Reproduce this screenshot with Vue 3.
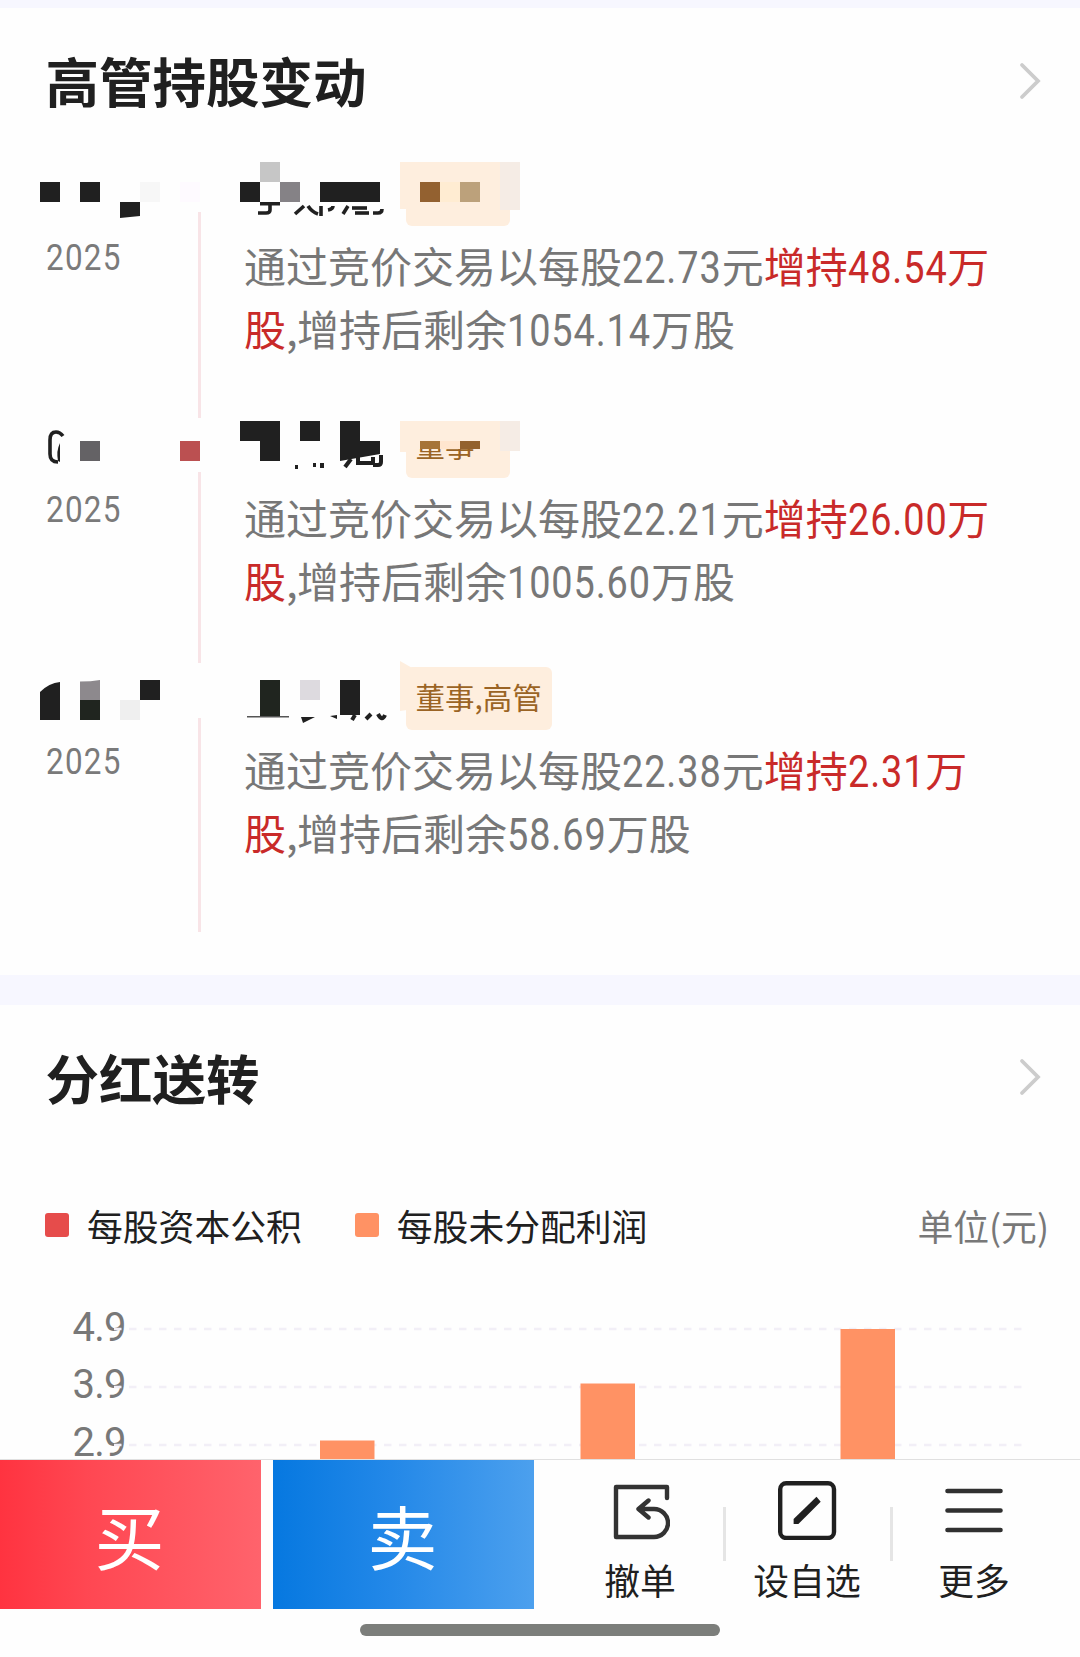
<script setup>
import { h } from 'vue'

const ink = '#202020'

// Narrow figures: glyphs are condensed and the freed width is given back to the line.
const squeeze = 0.86
const Num = ({ value }) => {
  const digits = value.length - 1
  const natural = 24.7 * digits + 11.6 + 1.06 * value.length
  return h('span', { class: 'num', style: { marginRight: `${-(1 - squeeze) * natural}px` } }, value)
}
Num.props = ['value']

const changes = [
  {
    price: '22.73', amount: '48.54', rest: '1054.14', rail: [52, 206],
    blocks: [
      [40, 22, 20, 20, ink], [80, 22, 20, 20, ink], [140, 22, 20, 20, '#f7f7f7'], [180, 22, 20, 20, '#fefaff'],
      [260, 2, 20, 20, '#c6c6c6'], [240, 22, 20, 20, ink], [280, 22, 20, 20, '#858286'], [320, 22, 60, 20, ink],
      [260, 42, 20, 3.5, ink]
    ],
    shapes: ['M120 42h20v14l-20 2z'],
    strokes: ['M270 45v5q0 3-4 3h-8', 'M295 54l9-8', 'M308 46q4 6 10 8', 'M321 46v10', 'M328 50q5-1 5-4', 'M348 46l-5 8', 'M352 48h15', 'M355 53h14', 'M382 49q0 4-4 4h-5'],
    tag: { x: 406, y: 20, w: 104, h: 46, cap: [400, 2, 100, 47], edge: [500, 2, 20, 48] },
    tagBlocks: [[420, 22, 20, 20, '#936130'], [440, 22, 20, 20, '#ffecd2'], [460, 22, 20, 20, '#bca17b']]
  },
  {
    price: '22.21', amount: '26.00', rest: '1005.60', rail: [60, 191],
    blocks: [
      [80, 29, 20, 20, '#646265'], [180, 29, 20, 20, '#bb5051'],
      [240, 9, 40, 20, ink], [260, 29, 20, 20, ink], [300, 9, 20, 20, ink], [340, 9, 20, 20, ink]
    ],
    shapes: ['M340 29h40v13l-40 7z', 'M60 31v19l-2-1q-2-10 2-18z'],
    strokes: ['M63 24q-3-4-7-4-6 0-6 8v14q0 8 8 8'],
    bold: ['M351 47l-6 8', 'M358 45v6h15v-6', 'M381 43v7q0 3-3 3h-5', 'M322 51v5', 'M313 53h3', 'M295 55h3'],
    tag: { x: 406, y: 30, w: 104, h: 36, cap: [400, 9, 100, 31], edge: [500, 9, 20, 30] },
    tagBlocks: [[420, 29, 20, 8, '#a67438'], [440, 29, 20, 8, '#ffe6cf'], [460, 29, 20, 8, '#93622e']],
    tagText: '董事', cut: 37
  },
  {
    price: '22.38', amount: '2.31', rest: '58.69', rail: [54, 214],
    blocks: [
      [80, 36, 20, 20, '#20251f'], [120, 36, 20, 20, '#efefef'], [140, 16, 20, 20, ink],
      [260, 16, 20, 36, '#20251f'], [300, 16, 20, 20, '#dddadf'], [340, 16, 20, 35, ink], [247, 52, 42, 1.5, '#555']
    ],
    shapes: ['M40 28q9-9 20-10v38H40z', 'M301 53l14 0-12 6z', 'M330 52l7-1v4z'],
    greys: ['M80 17.5q11 0 20-1.5v20H80z'],
    strokes: [],
    bold: ['M355 51l-3 5', 'M371 50l-5 5', 'M378 50q4 8 7 1'],
    tag: { x: 406, y: 3, w: 146, h: 63, flag: 'M400-3l14 8v40l-14 2z' },
    tagBlocks: [],
    tagText: '董事,高管', cut: 0
  }
]

const ticks = [
  { label: '4.9', y: 49, base: 60.5 },
  { label: '3.9', y: 107, base: 117.5 },
  { label: '2.9', y: 165, base: 176 }
]
const bars = [
  { x: 320, y: 160.5 },
  { x: 580.5, y: 103.5 },
  { x: 840.5, y: 49 }
]
</script>

<template>
  <main class="page">
    <section class="card holdings">
      <header class="head">
        <h2>高管持股变动</h2>
        <svg class="chevron" width="24" height="40" viewBox="0 0 24 40"><path d="M4 4l16 16L4 36" /></svg>
      </header>

      <article v-for="(c, i) in changes" :key="i" class="change">
        <svg class="person" width="1080" height="75" viewBox="0 0 1080 75">
          <rect x="198" :y="c.rail[0]" width="3" :height="c.rail[1]" fill="#f8e4e7" />
          <rect v-for="(b, n) in c.blocks" :key="n" :x="b[0]" :y="b[1]" :width="b[2]" :height="b[3]" :fill="b[4]" />
          <path v-for="d in c.shapes" :key="d" :d="d" :fill="ink" />
          <path v-for="d in c.greys || []" :key="d" :d="d" fill="#8d898d" />
          <path v-for="d in c.strokes" :key="d" :d="d" fill="none" :stroke="ink" stroke-width="3.6" />
          <path v-for="d in c.bold || []" :key="d" :d="d" fill="none" :stroke="ink" stroke-width="4" />
          <g fill="#feeede">
            <rect :x="c.tag.x" :y="c.tag.y" :width="c.tag.w" :height="c.tag.h" rx="6" />
            <rect v-if="c.tag.cap" :x="c.tag.cap[0]" :y="c.tag.cap[1]" :width="c.tag.cap[2]" :height="c.tag.cap[3]" />
            <path v-if="c.tag.flag" :d="c.tag.flag" />
          </g>
          <rect v-if="c.tag.edge" :x="c.tag.edge[0]" :y="c.tag.edge[1]" :width="c.tag.edge[2]" :height="c.tag.edge[3]" fill="#f5ece5" />
          <clipPath :id="'cut' + i"><rect x="400" :y="c.cut || 0" width="160" height="60" /></clipPath>
          <text v-if="c.tagText" class="tag-text" x="415.5" :y="i === 1 ? 45 : 45" :clip-path="`url(#cut${i})`">{{ c.tagText }}</text>
          <rect v-for="(b, n) in c.tagBlocks" :key="'t' + n" :x="b[0]" :y="b[1]" :width="b[2]" :height="b[3]" :fill="b[4]" />
        </svg>
        <div class="body">
          <span class="year">2025</span>
          <p class="desc">通过竞价交易以每股<Num :value="c.price" />元<span class="up">增持<Num :value="c.amount" />万股</span><span class="comma">,</span>增持后剩余<Num :value="c.rest" />万股</p>
        </div>
      </article>
    </section>

    <section class="card dividend">
      <header class="head">
        <h2>分红送转</h2>
        <svg class="chevron" width="24" height="40" viewBox="0 0 24 40"><path d="M4 4l16 16L4 36" /></svg>
      </header>
      <div class="legend">
        <i class="swatch red"></i><span>每股资本公积</span>
        <i class="swatch orange"></i><span>每股未分配利润</span>
        <span class="unit">单位(元)</span>
      </div>
      <svg class="chart" width="1080" height="179" viewBox="0 0 1080 179">
        <text v-for="t in ticks" :key="t.label" class="tick" x="72.500" :y="t.base">{{ t.label }}</text>
        <line v-for="t in ticks" :key="t.y" x1="114" x2="1023" :y1="t.y" :y2="t.y" stroke="#f2eff7" stroke-width="2.400" stroke-dasharray="7.5 7.5" />
        <rect v-for="b in bars" :key="b.x" :x="b.x" :y="b.y" width="54.500" :height="179 - b.y" fill="#ff9264" />
      </svg>
    </section>

    <footer class="actions">
      <button class="trade buy">买</button>
      <button class="trade sell">卖</button>
      <nav class="tools">
        <div class="tool">
          <svg width="60" height="62" viewBox="0 0 60 62" fill="none" stroke="#333" stroke-width="4.4" stroke-linecap="round" stroke-linejoin="round">
            <path d="M57 20V9H6v50H44a14 14 0 0 0 0-28H29M38.500 22.500l-10 8.500 10 8.500" />
          </svg>
          <span>撤单</span>
        </div>
        <div class="tool">
          <svg width="60" height="62" viewBox="0 0 60 62">
            <rect x="3.200" y="5.200" width="53.800" height="54.800" rx="6" fill="none" stroke="#202020" stroke-width="4.400" />
            <path d="M39.500 18.700l4.200 5-22.300 22.300h-4.800v-5z" fill="#202020" />
          </svg>
          <span>设自选</span>
        </div>
        <div class="tool">
          <svg width="60" height="62" viewBox="0 0 60 62" stroke="#303030" stroke-width="4.600" stroke-linecap="round">
            <path d="M3.500 13h53M3.500 32.500h53M3.500 52h53" />
          </svg>
          <span>更多</span>
        </div>
      </nav>
    </footer>
    <div class="home"></div>
  </main>
</template>

<style>
body { background: #fefefe; }
.num {
  display: inline-block;
  font-family: Roboto, sans-serif;
  font-size: 44px;
  letter-spacing: 1.06px;
  line-height: 1;
  transform: scaleX(0.86);
  transform-origin: left;
}
</style>

<style scoped>
.page {
  width: 1080px;
  height: 1657px;
  overflow: hidden;
  background: #fefefe;
  color: #202020;
  font-family: "Noto Sans CJK SC", sans-serif;
}
.card { border-top: 30px solid #f7f7ff; box-sizing: border-box; }
.holdings { height: 975px; border-top-width: 8px; }
.dividend { height: 484px; overflow: hidden; }
.head {
  height: 152px;
  padding: 0 38px 0 45.5px;
  display: flex;
  justify-content: space-between;
  align-items: flex-start;
}
h2 {
  margin: 32px 0 0;
  font-size: 53.5px;
  line-height: 80px;
  font-weight: 700;
}
.chevron { margin-top: 53px; }
.dividend .chevron { margin-top: 52px; }
.chevron path { fill: none; stroke: #ccc; stroke-width: 3.8; stroke-linecap: round; }
.change { height: 252px; }
.person { display: block; overflow: visible; }
.tag-text { font-size: 29.5px; fill: #9b6425; }
.body { display: flex; padding-left: 45.5px; }
.year {
  width: 198.5px;
  padding-top: 2px;
  font: 36.5px/42px Roboto, sans-serif;
  letter-spacing: 1.5px;
  color: #7a7a7a;
  transform: scaleX(0.86);
  transform-origin: left;
}
.desc {
  margin: -2px 0 0;
  width: 752px;
  font-size: 42px;
  line-height: 63px;
  color: #777;
}
.up { color: #c92a29; }
.comma { display: inline-block; width: 11px; line-height: 1; }
.legend {
  height: 48px;
  margin-top: 44px;
  padding: 0 31px 0 45px;
  display: flex;
  align-items: center;
  font-size: 35.8px;
  line-height: 48px;
}
.swatch { width: 24px; height: 24px; border-radius: 3px; margin-right: 18px; }
.swatch.red { background: #e64c4b; }
.swatch.orange { background: #ff9264; margin-left: 53px; }
.unit { margin-left: auto; color: #787878; }
.chart { display: block; margin-top: 31px; }
.tick { font: 40px Roboto, sans-serif; fill: #787878; letter-spacing: -0.8px; }
.actions {
  height: 150px;
  box-sizing: border-box;
  border-top: 1px solid #e0e0e0;
  display: flex;
}
.trade {
  width: 261px;
  height: 149px;
  border: 0;
  padding: 0 2px 0 0;
  margin-right: 12px;
  color: #fff;
  font: 70px/100px "Noto Sans CJK SC", sans-serif;
}
.buy { background: linear-gradient(90deg, #ff3340, #ff4752 33%, #ff636c); }
.sell { background: linear-gradient(90deg, #0678e0, #2388e8 45%, #4ca0ee); margin-right: 22.5px; }
.tools { display: flex; }
.tool {
  position: relative;
  width: 167px;
  display: flex;
  flex-direction: column;
  align-items: center;
  padding-top: 18px;
  box-sizing: border-box;
  font-size: 35.8px;
  line-height: 48px;
}
.tool:not(:last-child)::after {
  content: "";
  position: absolute;
  right: -2px;
  top: 47px;
  width: 3px;
  height: 54px;
  background: #e5e5e5;
}
.tool span { margin-top: 15px; white-space: nowrap; }
.home { width: 360px; height: 12px; border-radius: 6px; background: #7c7e7b; margin: 15px auto 0; }
</style>
